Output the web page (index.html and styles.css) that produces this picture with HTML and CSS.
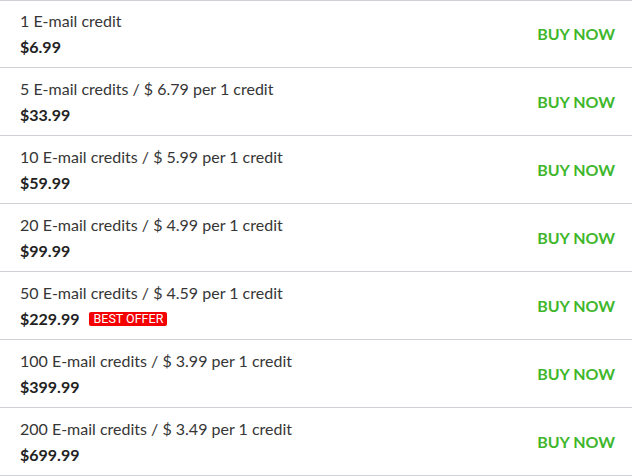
FILE: index.html
```html
<!DOCTYPE html>
<html lang="en">
<head>
    <meta charset="UTF-8">
    <meta name="viewport" content="width=device-width, initial-scale=1.0">
    <title>E-mail Credits</title>
    <link rel="stylesheet" href="styles.css">
</head>
<body>
    <div class="credit-list">
        <div class="credit-row">
            <div class="credit-info">
                <div class="credit-name">1 E-mail credit</div>
                <div class="credit-price">$6.99</div>
            </div>
            <a class="buy-now" href="#">BUY NOW</a>
        </div>
        <div class="credit-row">
            <div class="credit-info">
                <div class="credit-name">5 E-mail credits / $ 6.79 per 1 credit</div>
                <div class="credit-price">$33.99</div>
            </div>
            <a class="buy-now" href="#">BUY NOW</a>
        </div>
        <div class="credit-row">
            <div class="credit-info">
                <div class="credit-name">10 E-mail credits / $ 5.99 per 1 credit</div>
                <div class="credit-price">$59.99</div>
            </div>
            <a class="buy-now" href="#">BUY NOW</a>
        </div>
        <div class="credit-row">
            <div class="credit-info">
                <div class="credit-name">20 E-mail credits / $ 4.99 per 1 credit</div>
                <div class="credit-price">$99.99</div>
            </div>
            <a class="buy-now" href="#">BUY NOW</a>
        </div>
        <div class="credit-row">
            <div class="credit-info">
                <div class="credit-name">50 E-mail credits / $ 4.59 per 1 credit</div>
                <div class="credit-price">$229.99 <span class="badge">BEST OFFER</span></div>
            </div>
            <a class="buy-now" href="#">BUY NOW</a>
        </div>
        <div class="credit-row">
            <div class="credit-info">
                <div class="credit-name">100 E-mail credits / $ 3.99 per 1 credit</div>
                <div class="credit-price">$399.99</div>
            </div>
            <a class="buy-now" href="#">BUY NOW</a>
        </div>
        <div class="credit-row">
            <div class="credit-info">
                <div class="credit-name">200 E-mail credits / $ 3.49 per 1 credit</div>
                <div class="credit-price">$699.99</div>
            </div>
            <a class="buy-now" href="#">BUY NOW</a>
        </div>
    </div>
</body>
</html>
```
FILE: styles.css
```css
body {
    margin: 0;
    padding: 0;
    background: #fff;
    font-family: 'Lato', 'Inter', sans-serif;
    color: #2b2b2b;
}

.credit-list {
    border-top: 1px solid #cfd3d8;
}

.credit-row {
    display: flex;
    align-items: center;
    justify-content: space-between;
    height: 67px;
    padding: 0 17px 0 20px;
    border-bottom: 1px solid #cfd3d8;
}

.credit-row:first-child {
    margin-top: -1px;
}

.credit-name {
    font-size: 16px;
    line-height: 24px;
    color: #363636;
}

.credit-price {
    display: flex;
    align-items: center;
    gap: 10px;
    margin-top: 2px;
    font-size: 16px;
    line-height: 24px;
    font-weight: 700;
    color: #222;
}

.badge {
    background: #f40000;
    color: #fff;
    font-family: 'Roboto', sans-serif;
    font-size: 12.5px;
    font-weight: 400;
    line-height: 14px;
    padding: 0 4px;
    border-radius: 2px;
}

.buy-now {
    color: #3fb72c;
    font-size: 16px;
    font-weight: 700;
    text-decoration: none;
}
```
